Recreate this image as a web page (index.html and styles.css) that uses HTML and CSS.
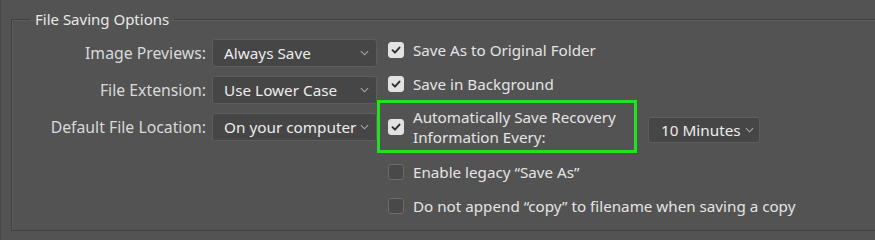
FILE: index.html
```html
<!DOCTYPE html>
<html lang="en">
<head>
  <meta charset="UTF-8">
  <title>File Saving Options</title>
  <link rel="stylesheet" href="styles.css">
</head>
<body>
  <fieldset class="group">
    <legend>File Saving Options</legend>
    <div class="panel">
      <!-- Left: dropdown settings -->
      <div class="fields">
        <label class="field-label">Image Previews:</label>
        <div class="select"><span>Always Save</span><svg class="chev" viewBox="0 0 10 6"><polyline points="1,1 5,5 9,1"/></svg></div>
        <label class="field-label">File Extension:</label>
        <div class="select"><span>Use Lower Case</span><svg class="chev" viewBox="0 0 10 6"><polyline points="1,1 5,5 9,1"/></svg></div>
        <label class="field-label">Default File Location:</label>
        <div class="select"><span>On your computer</span><svg class="chev" viewBox="0 0 10 6"><polyline points="1,1 5,5 9,1"/></svg></div>
      </div>

      <!-- Right: checkboxes -->
      <div class="checks">
        <div class="check row1">
          <span class="box checked"><svg viewBox="0 0 16 16"><path d="M4 8.2 L6.8 11 L12 5.2"/></svg></span>
          <span>Save As to Original Folder</span>
        </div>
        <div class="check row2">
          <span class="box checked"><svg viewBox="0 0 16 16"><path d="M4 8.2 L6.8 11 L12 5.2"/></svg></span>
          <span>Save in Background</span>
        </div>
        <div class="recovery">
          <div class="check highlight">
            <span class="box checked"><svg viewBox="0 0 16 16"><path d="M4 8.2 L6.8 11 L12 5.2"/></svg></span>
            <span class="two-line">Automatically Save Recovery<br>Information Every:</span>
          </div>
          <div class="select small"><span>10 Minutes</span><svg class="chev" viewBox="0 0 10 6"><polyline points="1,1 5,5 9,1"/></svg></div>
        </div>
        <div class="check row4">
          <span class="box"></span>
          <span>Enable legacy “Save As”</span>
        </div>
        <div class="check row5">
          <span class="box"></span>
          <span>Do not append “copy” to filename when saving a copy</span>
        </div>
      </div>
    </div>
  </fieldset>
</body>
</html>
```

FILE: styles.css
```css
/* Photoshop-style dark preferences panel */
html, body {
  margin: 0;
  height: 240px;
  overflow: hidden;
}

body {
  background-color: #535353;
  color: #e4e4e4;
  font-family: "Noto Sans", "Open Sans", sans-serif;
  font-size: 14px;
  padding: 10px 0 0 11px;
  box-sizing: border-box;
  box-shadow: inset 1px 0 0 #484848;
}

.group {
  margin: 0;
  padding: 0;
  width: 900px;
  height: 221px;
  border: 1px solid #414141;
  border-right: none;
  box-shadow: inset 1px 1px 0 #5c5c5c;
  box-sizing: border-box;
}

.group legend {
  margin-left: 18px;
  padding: 0 5px;
  font-size: 15px;
  line-height: 18px;
  color: #e8e8e8;
}

.panel {
  display: flex;
  padding-top: 11px;
}

/* Left column */
.fields {
  display: grid;
  grid-template-columns: 194px 165px;
  grid-auto-rows: 28px;
  row-gap: 9px;
  column-gap: 6px;
  align-items: center;
}

.field-label {
  text-align: right;
  color: #d9d9d9;
  font-size: 15.8px;
}

.select {
  height: 28px;
  box-sizing: border-box;
  display: flex;
  align-items: center;
  justify-content: space-between;
  padding: 0 7px 0 11px;
  background-color: #464646;
  border: 1px solid #5d5d5d;
  border-radius: 3px;
  color: #ececec;
  font-size: 15.3px;
  white-space: nowrap;
}

.chev {
  width: 9px;
  height: 6px;
  margin-left: 4px;
  flex: none;
  fill: none;
  stroke: #a8a8a8;
  stroke-width: 1.2;
}

/* Right column */
.checks {
  display: flex;
  flex-direction: column;
}

.check {
  display: flex;
  align-items: center;
  padding-left: 11px;
  font-size: 15.2px;
  white-space: nowrap;
}

.box {
  width: 16px;
  height: 16px;
  box-sizing: border-box;
  border-radius: 3px;
  border: 1px solid #6b6b6b;
  background-color: #494949;
  margin-right: 9px;
  flex: none;
}

.box.checked {
  background-color: #e2e2e2;
  border-color: #e2e2e2;
}

.box svg {
  display: block;
  width: 14px;
  height: 14px;
  fill: none;
  stroke: #2e2e2e;
  stroke-width: 2.2;
  stroke-linecap: round;
  stroke-linejoin: round;
}

.row1 {
  height: 28px;
  margin-top: -3px;
}

.row2 {
  height: 24px;
  margin-top: 8px;
}

.recovery {
  display: flex;
  align-items: center;
  margin-top: 4px;
}

.highlight {
  width: 260px;
  height: 53px;
  box-sizing: border-box;
  border: 3px solid #25e01f;
  padding-left: 8px;
}

.two-line {
  line-height: 20px;
}

.select.small {
  margin-left: 11px;
  margin-top: 6px;
  width: 112px;
  height: 26px;
  padding: 0 9px 0 12px;
}

.row4 {
  height: 28px;
  margin-top: 5px;
}

.row5 {
  height: 28px;
  margin-top: 6px;
}
```
